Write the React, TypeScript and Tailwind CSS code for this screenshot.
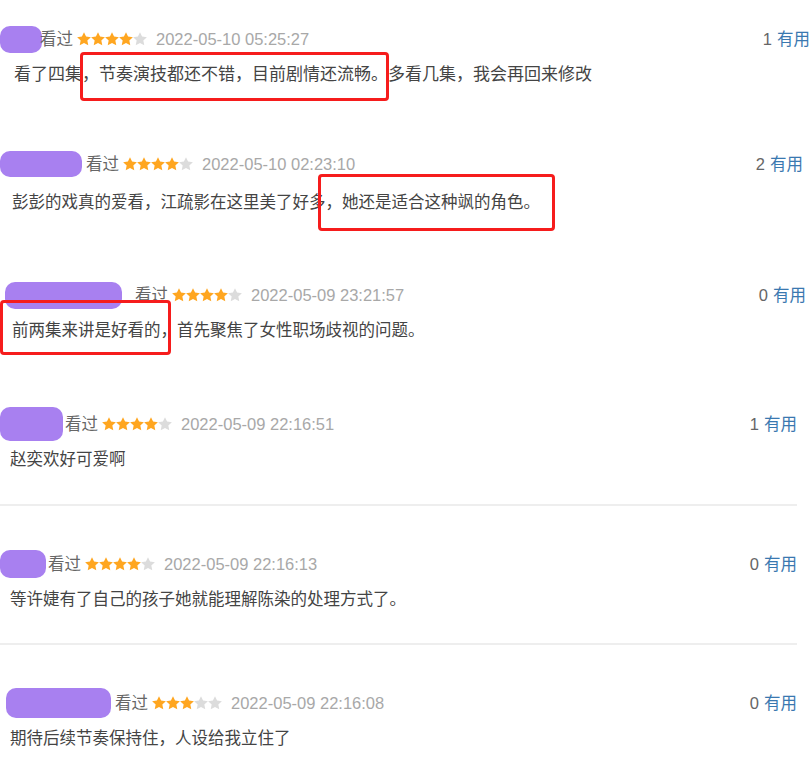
const reviews = [
  {
    top: "mt-[26px]",
    blob: "ml-0 w-[42px] h-[27px]",
    gap: "ml-[-2px]",
    stars: 4,
    date: "2022-05-10 05:25:27",
    useful: 1,
    right: "mr-0",
    size: "text-[17px]",
    indent: "mt-[10px] ml-[14px]",
    text: "看了四集，节奏演技都还不错，目前剧情还流畅。多看几集，我会再回来修改",
  },
  {
    top: "mt-[63px]",
    blob: "ml-0 w-[82px] h-[26px]",
    gap: "ml-[4px]",
    stars: 4,
    date: "2022-05-10 02:23:10",
    useful: 2,
    right: "mr-[7px]",
    size: "text-[16.5px]",
    indent: "mt-[12px] ml-[12px]",
    text: "彭彭的戏真的爱看，江疏影在这里美了好多，她还是适合这种飒的角色。",
  },
  {
    top: "mt-[67px]",
    blob: "ml-[5px] w-[117px] h-[27px]",
    gap: "ml-[13px]",
    stars: 4,
    date: "2022-05-09 23:21:57",
    useful: 0,
    right: "mr-[4px]",
    size: "text-[16.5px]",
    indent: "mt-[9px] ml-[12px]",
    text: "前两集来讲是好看的，首先聚焦了女性职场歧视的问题。",
  },
  {
    top: "mt-[68px]",
    blob: "ml-0 w-[63px] h-[34px]",
    gap: "ml-[2px]",
    stars: 4,
    date: "2022-05-09 22:16:51",
    useful: 1,
    right: "mr-[13px]",
    size: "text-[16.5px]",
    indent: "mt-[9px] ml-[10px]",
    text: "赵奕欢好可爱啊",
  },
  {
    top: "mt-[45px]",
    blob: "ml-0 w-[46px] h-[28px]",
    gap: "ml-[2px]",
    stars: 4,
    date: "2022-05-09 22:16:13",
    useful: 0,
    right: "mr-[13px]",
    size: "text-[16.5px]",
    indent: "mt-[9px] ml-[10px]",
    text: "等许婕有了自己的孩子她就能理解陈染的处理方式了。",
  },
  {
    top: "mt-[45px]",
    blob: "ml-[6px] w-[105px] h-[30px]",
    gap: "ml-[4px]",
    stars: 3,
    date: "2022-05-09 22:16:08",
    useful: 0,
    right: "mr-[13px]",
    size: "text-[16.5px]",
    indent: "mt-[9px] ml-[10px]",
    text: "期待后续节奏保持住，人设给我立住了",
  },
];

function Star({ on }: { on: boolean }) {
  return (
    <svg width="14" height="14" viewBox="1.5 1.5 21 21" className="block">
      <path
        d="M12 1.8l3.1 6.6 7.2.9-5.3 5 1.4 7.1L12 17.9l-6.4 3.5L7 14.3l-5.3-5 7.2-.9z"
        fill={on ? "#ffa620" : "#dcdcdc"}
      />
    </svg>
  );
}

export default function App() {
  return (
    <div
      className="relative w-[810px] h-[760px] overflow-hidden bg-white text-[#333]"
      style={{ fontFamily: '"Liberation Sans", "Noto Sans CJK SC", sans-serif' }}
    >
      {reviews.map((r, i) => (
        <div key={i}>
          {i === 4 ? <div className="mt-[32px] w-[797px] h-[2px] bg-[#eeeeee]" /> : null}
          {i === 5 ? <div className="mt-[31px] w-[797px] h-[2px] bg-[#eeeeee]" /> : null}
          <div className={`${r.top} flex items-center h-[26px]`}>
            <div className={`${r.blob} shrink-0 rounded-[10px] bg-[#a880f0]`} />
            <span className={`${r.gap} text-[16.5px] text-[#666]`}>看过</span>
            <div className="ml-[4px] flex">
              {[0, 1, 2, 3, 4].map((s) => (
                <Star key={s} on={s < r.stars} />
              ))}
            </div>
            <span className="ml-[9px] text-[16.5px] text-[#a8a8a8]">{r.date}</span>
            <div className={`ml-auto ${r.right} flex items-center gap-[5px] text-[16.5px] whitespace-nowrap`}>
              <span className="text-[#666]">{r.useful}</span>
              <span className="text-[#3a78b0]">有用</span>
            </div>
          </div>
          <p className={`${r.indent} ${r.size} leading-[26px] text-[#444]`}>{r.text}</p>
        </div>
      ))}

      <div className="absolute left-[80px] top-[52px] w-[309px] h-[49px] border-[3px] border-[#f61c1c] rounded-[4px]" />
      <div className="absolute left-[318px] top-[174px] w-[237px] h-[57px] border-[3px] border-[#f61c1c] rounded-[4px]" />
      <div className="absolute left-0 top-[300px] w-[171px] h-[55px] border-[3px] border-[#f61c1c] rounded-[4px]" />
    </div>
  );
}
